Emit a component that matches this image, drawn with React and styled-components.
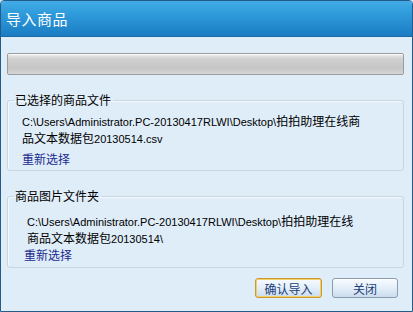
import React from "react";
import styled, { createGlobalStyle } from "styled-components";

const Global = createGlobalStyle`
  html, body {
    margin: 0;
    padding: 0;
    background: #dfedf9;
  }
  body {
    font-family: "Liberation Sans", "Noto Sans CJK SC", sans-serif;
    font-size: 12px;
    color: #000;
  }
`;

const Window = styled.div`
  box-sizing: border-box;
  width: 413px;
  height: 312px;
  display: flex;
  flex-direction: column;
  background: #dfedf9;
  border: 1px solid #235c88;
  border-radius: 4px 4px 0 0;
  overflow: hidden;
`;

const TitleBar = styled.div`
  height: 35px;
  flex-shrink: 0;
  display: flex;
  align-items: center;
  padding-left: 5px;
  background: linear-gradient(to bottom, #41ace5 0%, #2c97d8 45%, #1a7cc3 100%);
  border-bottom: 1px solid #1b6aa6;
  color: #fff;
  font-family: "Noto Sans CJK SC", sans-serif;
  font-size: 15px;
  letter-spacing: 0.5px;
`;

const Body = styled.div`
  flex: 1;
  display: flex;
  flex-direction: column;
  padding: 16px 8px 0 6px;
`;

const Progress = styled.div`
  height: 20px;
  border: 1px solid #9c9c9c;
  border-radius: 2px;
  background: linear-gradient(to bottom, #efefef 0%, #d0d0d0 25%, #c6c6c6 70%, #d6d6d6 100%);
  box-shadow: inset 0 1px 0 #fafafa;
`;

const Group = styled.fieldset`
  margin: ${(p) => p.$top}px 0 0 0;
  padding: 0;
  height: ${(p) => p.$height}px;
  box-sizing: border-box;
  border: 1px solid #c9d6e2;
  border-radius: 3px;
  box-shadow: inset 1px 1px 0 #f4f9fd;
`;

const Legend = styled.legend`
  margin-left: 6px;
  padding: 0 2px 0 1px;
  font-family: "Noto Sans CJK SC", sans-serif;
  font-size: 12px;
  line-height: 14px;
`;

const Path = styled.div`
  margin-top: ${(p) => p.$gap}px;
  margin-left: ${(p) => p.$indent}px;
  line-height: 16px;
  font-size: 11px;
  span {
    font-family: "Noto Sans CJK SC", sans-serif;
    font-size: 12px;
  }
`;

const Link = styled.a`
  display: block;
  margin-top: ${(p) => p.$gap}px;
  margin-left: ${(p) => p.$indent}px;
  color: #1b2a8e;
  font-family: "Noto Sans CJK SC", sans-serif;
  font-size: 12px;
  line-height: 16px;
  text-decoration: none;
  cursor: pointer;
`;

const Footer = styled.div`
  display: flex;
  justify-content: flex-end;
  gap: 10px;
  margin-top: 10px;
  padding-right: 6px;
`;

const Button = styled.button`
  width: ${(p) => p.$w}px;
  height: 20px;
  padding: 0;
  border: 1px solid ${(p) => (p.$primary ? "#c99a2e" : "#8a9cb0")};
  border-radius: 3px;
  background: linear-gradient(to bottom, #f7fbff 0%, #e4eef8 50%, #cbdced 100%);
  box-shadow: ${(p) => (p.$primary ? "inset 0 0 0 1px #f3cd6a" : "inset 0 1px 0 #ffffff")};
  color: #1b3f7a;
  font-family: "Noto Sans CJK SC", sans-serif;
  font-size: 12px;
  cursor: pointer;
`;

export default function App() {
  return (
    <>
      <Global />
      <Window>
        <TitleBar>导入商品</TitleBar>
        <Body>
          <Progress />
          <Group $top={18} $height={78}>
            <Legend>已选择的商品文件</Legend>
            <Path $gap={6} $indent={14}>
              C:\Users\Administrator.PC-20130417RLWI\Desktop\<span>拍拍助理在线商</span>
              <br />
              <span>品文本数据包</span>20130514.csv
            </Path>
            <Link $gap={4} $indent={14}>重新选择</Link>
          </Group>
          <Group $top={18} $height={79}>
            <Legend>商品图片文件夹</Legend>
            <Path $gap={10} $indent={19}>
              C:\Users\Administrator.PC-20130417RLWI\Desktop\<span>拍拍助理在线</span>
              <br />
              <span>商品文本数据包</span>20130514\
            </Path>
            <Link $gap={0} $indent={16}>重新选择</Link>
          </Group>
          <Footer>
            <Button $primary $w={67}>确认导入</Button>
            <Button $w={66}>关闭</Button>
          </Footer>
        </Body>
      </Window>
    </>
  );
}
